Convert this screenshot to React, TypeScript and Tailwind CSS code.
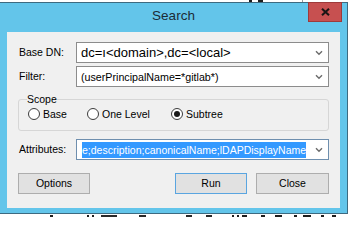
import React from "react";

function Chevron() {
  return (
    <svg width="8" height="6" viewBox="0 0 8 6" className="shrink-0">
      <path d="M1 1.2 L4 4.2 L7 1.2" fill="none" stroke="#6b6b6b" strokeWidth="1.4" />
    </svg>
  );
}

function Radio({ label, checked, width }: { label: string; checked?: boolean; width?: string }) {
  return (
    <div className={`flex items-center h-[16px] ${width ?? ""}`}>
      <div className="w-[12px] h-[12px] rounded-full border border-[#3c3c3c] bg-white flex items-center justify-center shrink-0">
        {checked && <div className="w-[6px] h-[6px] rounded-full bg-[#1a1a1a]" />}
      </div>
      <span className="ml-[3px] text-[10.5px] leading-[13px] text-black whitespace-nowrap">{label}</span>
    </div>
  );
}

export default function App() {
  return (
    <div className="w-[348px] h-[217px] bg-white overflow-hidden flex flex-col font-['Liberation_Sans',Arial,sans-serif]">
      {/* content behind, top */}
      <div className="h-[2px] shrink-0 flex">
        <div className="ml-[249px] w-[3px] bg-[#1e1e1e]" />
        <div className="ml-[6px] w-[5px] bg-[#1e1e1e]" />
        <div className="ml-[39px] w-[1px] bg-[#9a9a9a]" />
      </div>

      {/* window */}
      <div className="relative h-[212px] shrink-0 bg-[#63c5ea] border-t border-b border-r border-[#3d6a80] flex flex-col">
        {/* title bar */}
        <div className="h-[29px] shrink-0 flex justify-center pt-[5px]">
          <span className="text-[13.5px] leading-[16px] text-[#1c2b36]">Search</span>
        </div>
        <div className="absolute right-[5px] top-[-1px] w-[34px] h-[20px] bg-[#c75050] border border-[#9e3a3a] flex items-center justify-center">
          <svg width="9" height="8" viewBox="0 0 9 8">
            <path d="M1 0.8 L8 7.2 M8 0.8 L1 7.2" stroke="#1b1414" strokeWidth="2.1" />
          </svg>
        </div>

        {/* client area */}
        <div className="mx-[7px] h-[176px] shrink-0 bg-[#f0f0f0] px-[11px] pt-[10px] flex flex-col">
          {/* Base DN */}
          <div className="flex h-[21px]">
            <div className="w-[58px] pl-[1px] flex items-center text-[10.5px] text-black">Base DN:</div>
            <div className="flex-1 border border-[#8c8c8c] bg-white flex items-center pl-[4px] pr-[5px]">
              <span className="flex-1 text-[13px] leading-[16px] text-black whitespace-nowrap">dc=ı&lt;domain&gt;,dc=&lt;local&gt;</span>
              <Chevron />
            </div>
          </div>
          {/* Filter */}
          <div className="flex h-[21px] mt-[3px]">
            <div className="w-[58px] pl-[1px] flex items-center text-[10.5px] text-black">Filter:</div>
            <div className="flex-1 border border-[#8c8c8c] bg-white flex items-center pl-[4px] pr-[5px]">
              <span className="flex-1 text-[10.7px] leading-[14px] text-black whitespace-nowrap">(userPrincipalName=*gitlab*)</span>
              <Chevron />
            </div>
          </div>
          {/* Scope */}
          <fieldset className="mt-[6px] border border-[#d6d6d6] rounded-[3px] px-[8px] pb-[8px]">
            <legend className="text-[10.5px] leading-[13px] text-black px-0">Scope</legend>
            <div className="flex pl-[1px]">
              <Radio label="Base" width="w-[59px]" />
              <Radio label="One Level" width="w-[84px]" />
              <Radio label="Subtree" checked />
            </div>
          </fieldset>
          {/* Attributes */}
          <div className="flex h-[21px] mt-[8px]">
            <div className="w-[58px] pl-[1px] flex items-center text-[10.5px] text-black">Attributes:</div>
            <div className="flex-1 border border-[#6f8fae] bg-white flex items-center pl-[5px] pr-[5px]">
              <div className="flex-1 flex">
                <span className="bg-[#3399ff] text-white text-[10.5px] leading-[16px] whitespace-nowrap">e;description;canonicalName;lDAPDisplayName</span>
              </div>
              <Chevron />
            </div>
          </div>
          {/* Buttons */}
          <div className="flex mt-[13px] h-[21px]">
            <button className="w-[72px] border border-[#adadad] bg-[#e1e1e1] text-[10.5px] text-black">Options</button>
            <div className="flex-1" />
            <button className="w-[72px] border border-[#5aa5e0] bg-[#e1e1e1] text-[10.5px] text-black">Run</button>
            <button className="ml-[9px] w-[73px] border border-[#adadad] bg-[#e1e1e1] text-[10.5px] text-black">Close</button>
          </div>
        </div>
      </div>

      {/* content behind, bottom */}
      <div className="flex-1 flex pt-[1px]">
        <div className="ml-[50px] w-[3px] bg-[#1e1e1e]" />
        <div className="ml-[34px] w-[2px] bg-[#1e1e1e]" />
        <div className="ml-[3px] w-[2px] bg-[#1e1e1e]" />
        <div className="ml-[7px] w-[16px] bg-[#2a2a2a]" />
        <div className="ml-[22px] w-[7px] bg-[#2a2a2a]" />
        <div className="ml-[40px] w-[6px] bg-[#2a2a2a]" />
        <div className="ml-[14px] w-[6px] bg-[#2a2a2a]" />
        <div className="ml-[20px] w-[2px] bg-[#1e1e1e]" />
        <div className="ml-[3px] w-[2px] bg-[#1e1e1e]" />
        <div className="ml-[3px] w-[5px] bg-[#1e1e1e]" />
        <div className="ml-[14px] w-[4px] bg-[#1e1e1e]" />
        <div className="ml-[10px] w-[7px] bg-[#1e1e1e]" />
        <div className="ml-[12px] w-[3px] bg-[#1e1e1e]" />
        <div className="ml-[6px] w-[8px] bg-[#1e1e1e]" />
        <div className="ml-[10px] w-[3px] bg-[#1e1e1e]" />
        <div className="ml-[8px] w-[4px] bg-[#1e1e1e]" />
      </div>
    </div>
  );
}
